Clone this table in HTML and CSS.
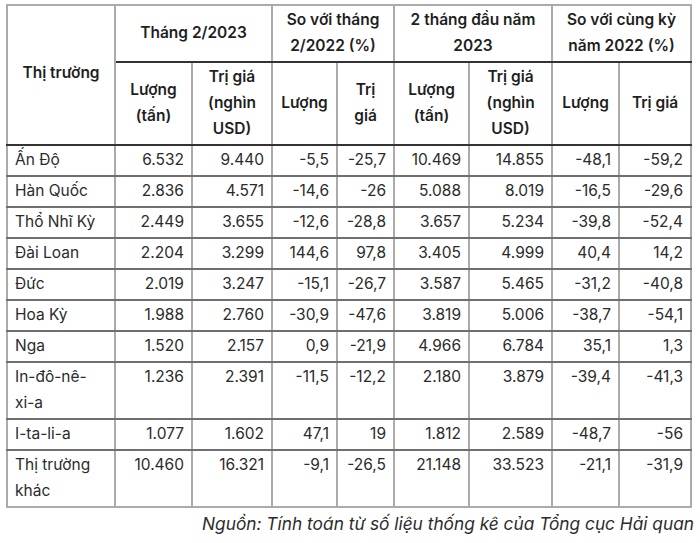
FILE: index.html
```html
<!DOCTYPE html>
<html lang="vi">
<head>
<meta charset="utf-8">
<link rel="stylesheet" href="styles.css">
</head>
<body>
<div class="wrap">
<table class="data">
<colgroup>
<col class="c1"><col class="c2"><col class="c3"><col class="c4"><col class="c5"><col class="c6"><col class="c7"><col class="c8"><col class="c9">
</colgroup>
<thead>
<tr>
<th rowspan="2" class="market">Thị trường</th>
<th colspan="2">Tháng 2/2023</th>
<th colspan="2">So với tháng 2/2022 (%)</th>
<th colspan="2">2 tháng đầu năm 2023</th>
<th colspan="2">So với cùng kỳ năm 2022 (%)</th>
</tr>
<tr>
<th>Lượng (tấn)</th>
<th>Trị giá (nghìn USD)</th>
<th>Lượng</th>
<th>Trị giá</th>
<th>Lượng (tấn)</th>
<th>Trị giá (nghìn USD)</th>
<th>Lượng</th>
<th>Trị giá</th>
</tr>
</thead>
<tbody>
<tr><td>Ấn Độ</td><td>6.532</td><td>9.440</td><td>-5,5</td><td>-25,7</td><td>10.469</td><td>14.855</td><td>-48,1</td><td>-59,2</td></tr>
<tr><td>Hàn Quốc</td><td>2.836</td><td>4.571</td><td>-14,6</td><td>-26</td><td>5.088</td><td>8.019</td><td>-16,5</td><td>-29,6</td></tr>
<tr><td>Thổ Nhĩ Kỳ</td><td>2.449</td><td>3.655</td><td>-12,6</td><td>-28,8</td><td>3.657</td><td>5.234</td><td>-39,8</td><td>-52,4</td></tr>
<tr><td>Đài Loan</td><td>2.204</td><td>3.299</td><td>144,6</td><td>97,8</td><td>3.405</td><td>4.999</td><td>40,4</td><td>14,2</td></tr>
<tr><td>Đức</td><td>2.019</td><td>3.247</td><td>-15,1</td><td>-26,7</td><td>3.587</td><td>5.465</td><td>-31,2</td><td>-40,8</td></tr>
<tr><td>Hoa Kỳ</td><td>1.988</td><td>2.760</td><td>-30,9</td><td>-47,6</td><td>3.819</td><td>5.006</td><td>-38,7</td><td>-54,1</td></tr>
<tr><td>Nga</td><td>1.520</td><td>2.157</td><td>0,9</td><td>-21,9</td><td>4.966</td><td>6.784</td><td>35,1</td><td>1,3</td></tr>
<tr><td>In-đô-nê-<br>xi-a</td><td>1.236</td><td>2.391</td><td>-11,5</td><td>-12,2</td><td>2.180</td><td>3.879</td><td>-39,4</td><td>-41,3</td></tr>
<tr><td>I-ta-li-a</td><td>1.077</td><td>1.602</td><td>47,1</td><td>19</td><td>1.812</td><td>2.589</td><td>-48,7</td><td>-56</td></tr>
<tr><td>Thị trường khác</td><td>10.460</td><td>16.321</td><td>-9,1</td><td>-26,5</td><td>21.148</td><td>33.523</td><td>-21,1</td><td>-31,9</td></tr>
</tbody>
</table>
<p class="source">Nguồn: Tính toán từ số liệu thống kê của Tổng cục Hải quan</p>
</div>
</body>
</html>
```

FILE: styles.css
```css
html, body {
  margin: 0;
  padding: 0;
  background: #fff;
}

body {
  font-family: Inter, "Noto Sans", sans-serif;
  color: #2b2b2b;
}

.wrap {
  padding: 4px 0 0 6px;
  width: 688px;
}

.data {
  border-collapse: collapse;
  table-layout: fixed;
  width: 684px;
  font-size: 15.5px;
  line-height: 26px;
}

.c1 { width: 108px; }
.c2 { width: 77px; }
.c3 { width: 80px; }
.c4 { width: 65px; }
.c5 { width: 57px; }
.c6 { width: 75px; }
.c7 { width: 83px; }
.c8 { width: 67px; }
.c9 { width: 72px; }

.data th,
.data td {
  border-left: 2px solid #ababab;
  border-right: 2px solid #ababab;
  border-top: 2px solid #6f6f6f;
  border-bottom: 2px solid #6f6f6f;
}

.data th {
  font-weight: 600;
  color: #1f1f1f;
  text-align: center;
  vertical-align: middle;
  padding: 1px 5px 2px 5px;
}

.data thead tr:first-child th {
  border-top-color: #ababab;
}

.data thead th {
  border-bottom-color: #333;
}

.data th.market {
  vertical-align: middle;
  padding-bottom: 6px;
}

.data td {
  vertical-align: top;
  text-align: right;
  padding: 1px 7px 2px 7px;
  font-weight: 400;
}

.data td:first-child {
  text-align: left;
}

.data tbody tr:last-child td {
  border-bottom-color: #ababab;
}

.source {
  margin: 3px 0 0 0;
  text-align: right;
  font-style: italic;
  font-size: 17.3px;
  line-height: 26px;
  color: #2b2b2b;
}
```
